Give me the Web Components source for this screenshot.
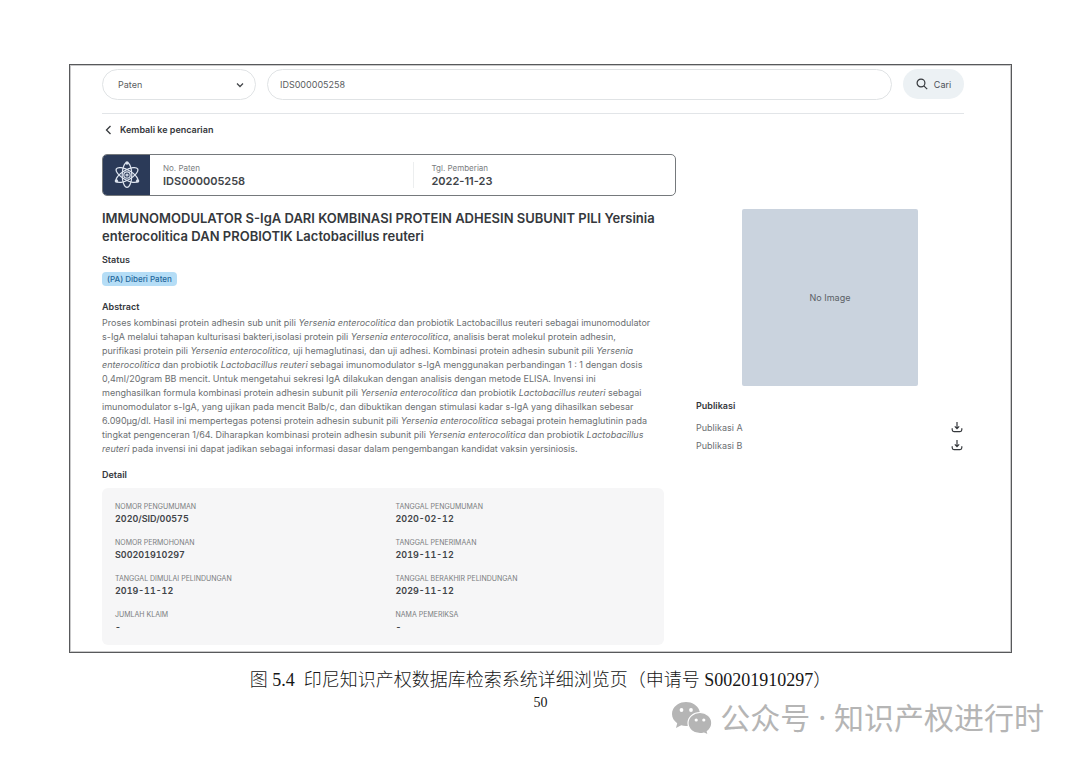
<!DOCTYPE html>
<html lang="id">
<head>
<meta charset="utf-8">
<meta name="viewport" content="width=device-width, initial-scale=1">
<title>Detail Paten</title>
<style>
  body {
    margin: 0;
    background: #fff;
    color: #414448;
    font-family: Inter, "Liberation Sans", sans-serif;
    font-size: 9px;
  }
</style>
</head>
<body>
<document-page>
  <patent-view>
    <search-bar slot="search" value="IDS000005258"></search-bar>
    <patent-card>
      <patent-field label="No. Paten" large>IDS000005258</patent-field>
      <patent-field label="Tgl. Pemberian" large>2022-11-23</patent-field>
    </patent-card>
    <patent-summary status="(PA) Diberi Paten">
      <span slot="title">IMMUNOMODULATOR S-IgA DARI KOMBINASI PROTEIN ADHESIN SUBUNIT PILI Yersinia<br>enterocolitica DAN PROBIOTIK Lactobacillus reuteri</span>
      Proses kombinasi protein adhesin sub unit pili <i>Yersenia enterocolitica</i> dan probiotik Lactobacillus reuteri sebagai imunomodulator<br>
      s-IgA melalui tahapan kulturisasi bakteri,isolasi protein pili <i>Yersenia enterocolitica</i>, analisis berat molekul protein adhesin,<br>
      purifikasi protein pili <i>Yersenia enterocolitica</i>, uji hemaglutinasi, dan uji adhesi. Kombinasi protein adhesin subunit pili <i>Yersenia<br>
      enterocolitica</i> dan probiotik <i>Lactobacillus reuteri</i> sebagai imunomodulator s-IgA menggunakan perbandingan 1 : 1 dengan dosis<br>
      0,4ml/20gram BB mencit. Untuk mengetahui sekresi IgA dilakukan dengan analisis dengan metode ELISA. Invensi ini<br>
      menghasilkan formula kombinasi protein adhesin subunit pili <i>Yersenia enterocolitica</i> dan probiotik <i>Lactobacillus reuteri</i> sebagai<br>
      imunomodulator s-IgA, yang ujikan pada mencit Balb/c, dan dibuktikan dengan stimulasi kadar s-IgA yang dihasilkan sebesar<br>
      6.090µg/dl. Hasil ini mempertegas potensi protein adhesin subunit pili <i>Yersenia enterocolitica</i> sebagai protein hemaglutinin pada<br>
      tingkat pengenceran 1/64. Diharapkan kombinasi protein adhesin subunit pili <i>Yersenia enterocolitica</i> dan probiotik <i>Lactobacillus<br>
      reuteri</i> pada invensi ini dapat jadikan sebagai informasi dasar dalam pengembangan kandidat vaksin yersiniosis.
    </patent-summary>
    <detail-panel>
      <patent-field label="NOMOR PENGUMUMAN">2020/SID/00575</patent-field>
      <patent-field label="TANGGAL PENGUMUMAN">2020-02-12</patent-field>
      <patent-field label="NOMOR PERMOHONAN">S00201910297</patent-field>
      <patent-field label="TANGGAL PENERIMAAN">2019-11-12</patent-field>
      <patent-field label="TANGGAL DIMULAI PELINDUNGAN">2019-11-12</patent-field>
      <patent-field label="TANGGAL BERAKHIR PELINDUNGAN">2029-11-12</patent-field>
      <patent-field label="JUMLAH KLAIM">-</patent-field>
      <patent-field label="NAMA PEMERIKSA">-</patent-field>
    </detail-panel>
    <image-placeholder slot="aside">No Image</image-placeholder>
    <publication-list slot="aside" items="Publikasi A,Publikasi B"></publication-list>
  </patent-view>
  <span slot="caption">图 5.4&ensp;印尼知识产权数据库检索系统详细浏览页（申请号 S00201910297）</span>
  <span slot="number">50</span>
  <account-mark slot="mark">公众号 · 知识产权进行时</account-mark>
</document-page>

<script>
class DocumentPage extends HTMLElement {
  constructor() {
    super();
    this.attachShadow({ mode: "open" });
    this.shadowRoot.innerHTML = `
      <style>
        :host {
          display: block;
          padding: 64px 68px 24px 69px;
        }

        figure {
          margin: 0;
        }

        .frame {
          border: 1px solid #58595b;
          outline: 1px solid #c9c9ca;
          outline-offset: -2px;
        }

        figcaption {
          margin-top: 15px;
          text-align: center;
          color: #161616;
          font: 18px/24px "Liberation Serif", "Noto Sans CJK SC", serif;
          font-weight: 300;
        }

        footer {
          display: grid;
          margin-right: -32px;
        }

        .number {
          grid-area: 1 / 1;
          margin-top: 1px;
          margin-right: 32px;
          text-align: center;
          color: #161616;
          font: 14px/20px "Liberation Serif", serif;
        }

        .mark {
          grid-area: 1 / 1;
          justify-self: end;
          margin-top: 8px;
        }
      </style>
      <figure>
        <div class="frame"><slot></slot></div>
        <figcaption><slot name="caption"></slot></figcaption>
      </figure>
      <footer>
        <div class="number"><slot name="number"></slot></div>
        <div class="mark"><slot name="mark"></slot></div>
      </footer>
    `;
  }
}

class PatentView extends HTMLElement {
  constructor() {
    super();
    this.attachShadow({ mode: "open" });
    this.shadowRoot.innerHTML = `
      <style>
        :host {
          display: block;
          padding: 4px 47px 7px 32px;
        }

        .back {
          display: flex;
          align-items: center;
          gap: 8px;
          width: max-content;
          margin: 8px 0 16px 3px;
          color: #35383c;
          font-weight: 600;
          line-height: 16px;
          text-decoration: none;
        }

        .columns {
          display: grid;
          grid-template-columns: minmax(0, 1fr) 268px;
          gap: 20px;
        }

        aside {
          padding-top: 55px;
        }
      </style>
      <slot name="search"></slot>
      <a class="back" href="#">
        <svg width="7" height="10" viewBox="0 0 7 10" fill="none" stroke="#35383c" stroke-width="1.3"><path d="M5.5 1 1.5 5l4 4"/></svg>
        Kembali ke pencarian
      </a>
      <div class="columns">
        <main><slot></slot></main>
        <aside><slot name="aside"></slot></aside>
      </div>
    `;
  }
}

class SearchBar extends HTMLElement {
  constructor() {
    super();
    this.attachShadow({ mode: "open" });
  }

  connectedCallback() {
    this.shadowRoot.innerHTML = `
      <style>
        :host {
          display: block;
          padding-bottom: 13px;
          border-bottom: 1px solid #e2e5e8;
        }

        form {
          display: flex;
          gap: 11px;
        }

        .kind {
          display: grid;
          flex: 0 0 154px;
          align-items: center;
        }

        select,
        input {
          box-sizing: border-box;
          width: 100%;
          height: 31px;
          border: 1px solid #e0e3e5;
          border-radius: 16px;
          background: #fff;
          color: #5a5d61;
          font: inherit;
        }

        select {
          grid-area: 1 / 1;
          appearance: none;
          padding: 0 32px 0 15px;
        }

        .kind svg {
          grid-area: 1 / 1;
          justify-self: end;
          margin-right: 12px;
          pointer-events: none;
        }

        input {
          flex: 1;
          min-width: 0;
          padding: 0 12px;
        }

        button {
          display: flex;
          flex: 0 0 61px;
          align-items: center;
          justify-content: center;
          gap: 6px;
          height: 30px;
          padding: 0;
          border: 0;
          border-radius: 15px;
          background: #ecf1f4;
          color: #4b4f54;
          font: inherit;
        }
      </style>
      <form>
        <div class="kind">
          <select aria-label="Jenis"><option>Paten</option></select>
          <svg width="8" height="6" viewBox="0 0 8 6" fill="none" stroke="#44474b" stroke-width="1.3"><path d="m1 1.5 3 3 3-3"/></svg>
        </div>
        <input type="text" aria-label="Kata kunci" value="${this.getAttribute("value") || ""}">
        <button type="button">
          <svg width="12" height="12" viewBox="0 0 12 12" fill="none" stroke="#35383c" stroke-width="1.2"><circle cx="5" cy="5" r="3.9"/><path d="m7.8 7.8 3.4 3.4"/></svg>
          Cari
        </button>
      </form>
    `;
  }
}

class PatentCard extends HTMLElement {
  constructor() {
    super();
    this.attachShadow({ mode: "open" });
    this.shadowRoot.innerHTML = `
      <style>
        :host {
          display: flex;
          height: 40px;
          overflow: hidden;
          border: 1px solid #75797c;
          border-radius: 5px;
        }

        .icon {
          display: flex;
          flex: 0 0 47px;
          align-items: center;
          justify-content: center;
          background: #2b3a58;
        }

        .fields {
          display: grid;
          flex: 1;
          grid-template-columns: 1fr 1fr;
          align-items: center;
          padding: 0 13px;
        }

        ::slotted(:nth-child(2)) {
          padding-left: 18px;
          border-left: 1px solid #eceeef;
        }
      </style>
      <div class="icon">
        <svg width="28" height="28" viewBox="0 0 28 28" fill="none" stroke="#dce3ee" stroke-width="1.2">
          <ellipse cx="14" cy="14" rx="4.8" ry="12.3"/>
          <ellipse cx="14" cy="14" rx="4.8" ry="12.3" transform="rotate(60 14 14)"/>
          <ellipse cx="14" cy="14" rx="4.8" ry="12.3" transform="rotate(-60 14 14)"/>
          <circle cx="14" cy="14" r="3.2"/>
          <circle cx="14" cy="14" r="1"/>
          <g fill="#dce3ee" stroke="none">
            <circle cx="14" cy="2" r="1.7"/>
            <circle cx="3.4" cy="20" r="1.7"/>
            <circle cx="24.6" cy="20" r="1.7"/>
          </g>
        </svg>
      </div>
      <div class="fields"><slot></slot></div>
    `;
  }
}

class PatentField extends HTMLElement {
  constructor() {
    super();
    this.attachShadow({ mode: "open" });
  }

  connectedCallback() {
    this.shadowRoot.innerHTML = `
      <style>
        :host {
          display: block;
        }

        dl,
        dd {
          margin: 0;
        }

        dt {
          color: #7a7d80;
          font-size: 7px;
          line-height: 12px;
        }

        dd {
          color: #414448;
          font-weight: 600;
          font-variant-numeric: tabular-nums;
          line-height: 12px;
        }

        :host([large]) dt {
          font-size: 8px;
        }

        :host([large]) dd {
          font-size: 11px;
          font-variant-numeric: normal;
          line-height: 14px;
        }
      </style>
      <dl>
        <dt>${this.getAttribute("label")}</dt>
        <dd><slot></slot></dd>
      </dl>
    `;
  }
}

class PatentSummary extends HTMLElement {
  constructor() {
    super();
    this.attachShadow({ mode: "open" });
  }

  connectedCallback() {
    this.shadowRoot.innerHTML = `
      <style>
        :host {
          display: block;
        }

        h1 {
          margin: 13px 0 8px;
          color: #35383c;
          font-size: 13px;
          font-weight: 600;
          line-height: 18px;
        }

        h2 {
          margin: 0;
          color: #35383c;
          font-size: 9px;
          font-weight: 600;
          line-height: 14px;
        }

        .badge {
          width: max-content;
          margin: 5px 0 14px;
          padding: 0 5px;
          border-radius: 4px;
          background: #b5ddf6;
          color: #24689c;
          font-size: 8px;
          font-weight: 500;
          line-height: 14px;
        }

        p {
          margin: 2px 0 12px;
          color: #6c6f72;
          line-height: 14px;
        }
      </style>
      <h1><slot name="title"></slot></h1>
      <h2>Status</h2>
      <div class="badge">${this.getAttribute("status")}</div>
      <h2>Abstract</h2>
      <p><slot></slot></p>
    `;
  }
}

class DetailPanel extends HTMLElement {
  constructor() {
    super();
    this.attachShadow({ mode: "open" });
    this.shadowRoot.innerHTML = `
      <style>
        :host {
          display: block;
        }

        h2 {
          margin: 0 0 6px;
          color: #35383c;
          font-size: 9px;
          font-weight: 600;
          line-height: 14px;
        }

        .panel {
          display: grid;
          grid-template-columns: 1fr 1fr;
          gap: 12px;
          margin-right: 12px;
          padding: 13px 0 12px 13px;
          border-radius: 6px;
          background: #f6f6f7;
        }
      </style>
      <h2>Detail</h2>
      <div class="panel"><slot></slot></div>
    `;
  }
}

class ImagePlaceholder extends HTMLElement {
  constructor() {
    super();
    this.attachShadow({ mode: "open" });
    this.shadowRoot.innerHTML = `
      <style>
        :host {
          display: flex;
          align-items: center;
          justify-content: center;
          width: 176px;
          height: 177px;
          margin: 0 auto;
          border-radius: 2px;
          background: #cad3de;
          color: #5a5f66;
        }
      </style>
      <slot></slot>
    `;
  }
}

class PublicationList extends HTMLElement {
  constructor() {
    super();
    this.attachShadow({ mode: "open" });
  }

  connectedCallback() {
    const items = this.getAttribute("items").split(",");

    this.shadowRoot.innerHTML = `
      <style>
        :host {
          display: block;
          margin-top: 13px;
        }

        h2 {
          margin: 0 0 5px;
          color: #35383c;
          font-size: 9px;
          font-weight: 600;
          line-height: 14px;
        }

        ul {
          margin: 0;
          padding: 0;
          list-style: none;
        }

        li {
          display: flex;
          align-items: center;
          justify-content: space-between;
          height: 18px;
          padding-right: 1px;
          color: #6c6f72;
        }

        a {
          display: flex;
        }
      </style>
      <h2>Publikasi</h2>
      <ul>
        ${items.map((item) => `
          <li>
            ${item}
            <a href="#" aria-label="Unduh ${item}">
              <svg width="12" height="12" viewBox="0 0 12 12" fill="none" stroke="#35383c" stroke-width="1.2"><path d="M6 1v6.5M3.8 5.4 6 7.6l2.2-2.2M1.2 7.2v1.6c0 1.2.7 1.8 1.8 1.8h6c1.1 0 1.8-.6 1.8-1.8V7.2"/></svg>
            </a>
          </li>
        `).join("")}
      </ul>
    `;
  }
}

class AccountMark extends HTMLElement {
  constructor() {
    super();
    this.attachShadow({ mode: "open" });
    this.shadowRoot.innerHTML = `
      <style>
        :host {
          display: flex;
          align-items: center;
          gap: 8px;
          color: #b5b5b5;
          font: 30px/36px "Noto Sans", "Noto Sans CJK SC", sans-serif;
        }
      </style>
      <svg width="40" height="33" viewBox="0 0 40 33">
        <path fill="#b5b5b5" d="M14 0C6.3 0 0 5.3 0 12c0 3.8 2 7 5.2 9.2L4 26l5.2-2.8c1.5.4 3.1.7 4.8.7C21.7 24 28 18.7 28 12S21.7 0 14 0Z"/>
        <path fill="#b5b5b5" stroke="#fff" stroke-width="1.2" d="M28 10.5c-6.7 0-12 4.7-12 10.6s5.3 10.6 12 10.6c1.4 0 2.7-.2 4-.6l4.3 2-1-3.7c2.8-2 4.5-4.900 4.500-8.300 0-5.900-5.100-10.600-11.800-10.600Z"/>
        <g fill="#fff">
          <circle cx="9.5" cy="8" r="1.9"/>
          <circle cx="19" cy="8" r="1.9"/>
          <circle cx="24.2" cy="18" r="1.6"/>
          <circle cx="31.8" cy="18" r="1.6"/>
        </g>
      </svg>
      <slot></slot>
    `;
  }
}

customElements.define("document-page", DocumentPage);
customElements.define("patent-view", PatentView);
customElements.define("search-bar", SearchBar);
customElements.define("patent-card", PatentCard);
customElements.define("patent-field", PatentField);
customElements.define("patent-summary", PatentSummary);
customElements.define("detail-panel", DetailPanel);
customElements.define("image-placeholder", ImagePlaceholder);
customElements.define("publication-list", PublicationList);
customElements.define("account-mark", AccountMark);
</script>
</body>
</html>
